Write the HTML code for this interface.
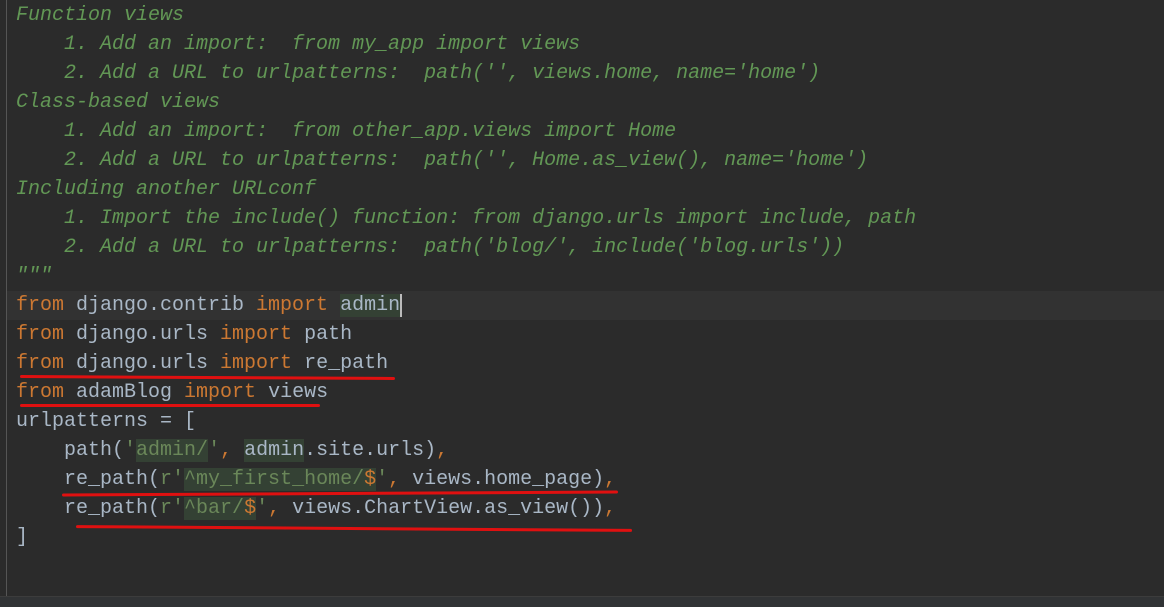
<!DOCTYPE html>
<html><head><meta charset="utf-8"><style>
body{margin:0;width:1164px;height:606px;background:#2b2b2b;overflow:hidden;position:relative;font-family:"Liberation Mono","DejaVu Sans Mono",monospace;font-size:20px;}
.g{position:absolute;left:6px;top:0;width:1px;height:596px;background:#555;}
.l{position:absolute;left:16px;height:29px;line-height:29px;white-space:pre;color:#a9b7c6;}
.c{color:#629755;font-style:italic}
.k{color:#cc7832}
.s{color:#6a8759}
.h{background:#344134}
.cur{position:absolute;left:7px;top:291px;width:1157px;height:29px;background:#323232}
.red{position:absolute;height:3px;background:#e01010;border-radius:2px}
.bot{position:absolute;left:0;top:596px;width:1164px;height:10px;background:#313335;border-top:1px solid #3c3c3c}
</style></head><body>
<div class="cur"></div>
<div class="g"></div>
<div class="l c" style="top:1px">Function views</div>
<div class="l c" style="top:30px">    1. Add an import:  from my_app import views</div>
<div class="l c" style="top:59px">    2. Add a URL to urlpatterns:  path('', views.home, name='home')</div>
<div class="l c" style="top:88px">Class-based views</div>
<div class="l c" style="top:117px">    1. Add an import:  from other_app.views import Home</div>
<div class="l c" style="top:146px">    2. Add a URL to urlpatterns:  path('', Home.as_view(), name='home')</div>
<div class="l c" style="top:175px">Including another URLconf</div>
<div class="l c" style="top:204px">    1. Import the include() function: from django.urls import include, path</div>
<div class="l c" style="top:233px">    2. Add a URL to urlpatterns:  path('blog/', include('blog.urls'))</div>
<div class="l c" style="top:262px">"""</div>
<div class="l" style="top:291px"><span class="k">from</span> django.contrib <span class="k">import</span> <span class="h">admin</span><span style="border-left:2px solid #bbb"></span></div>
<div class="l" style="top:320px"><span class="k">from</span> django.urls <span class="k">import</span> path</div>
<div class="l" style="top:349px"><span class="k">from</span> django.urls <span class="k">import</span> re_path</div>
<div class="l" style="top:378px"><span class="k">from</span> adamBlog <span class="k">import</span> views</div>
<div class="l" style="top:407px">urlpatterns = [</div>
<div class="l" style="top:436px">    path(<span class="s">'<span class="h">admin/</span>'</span><span class="k">,</span> <span class="h">admin</span>.site.urls)<span class="k">,</span></div>
<div class="l" style="top:465px">    re_path(<span class="s">r'<span class="h">^my_first_home/<span class="k">$</span></span>'</span><span class="k">,</span> views.home_page)<span class="k">,</span></div>
<div class="l" style="top:494px">    re_path(<span class="s">r'<span class="h">^bar/<span class="k">$</span></span>'</span><span class="k">,</span> views.ChartView.as_view())<span class="k">,</span></div>
<div class="l" style="top:523px">]</div>
<div class="red" style="left:20px;top:376px;width:375px;transform:rotate(0.3deg)"></div>
<div class="red" style="left:20px;top:404px;width:300px"></div>
<div class="red" style="left:62px;top:492px;width:556px;transform:rotate(-0.3deg)"></div>
<div class="red" style="left:76px;top:527px;width:556px;transform:rotate(0.4deg)"></div>
<div class="bot"></div>
</body></html>
